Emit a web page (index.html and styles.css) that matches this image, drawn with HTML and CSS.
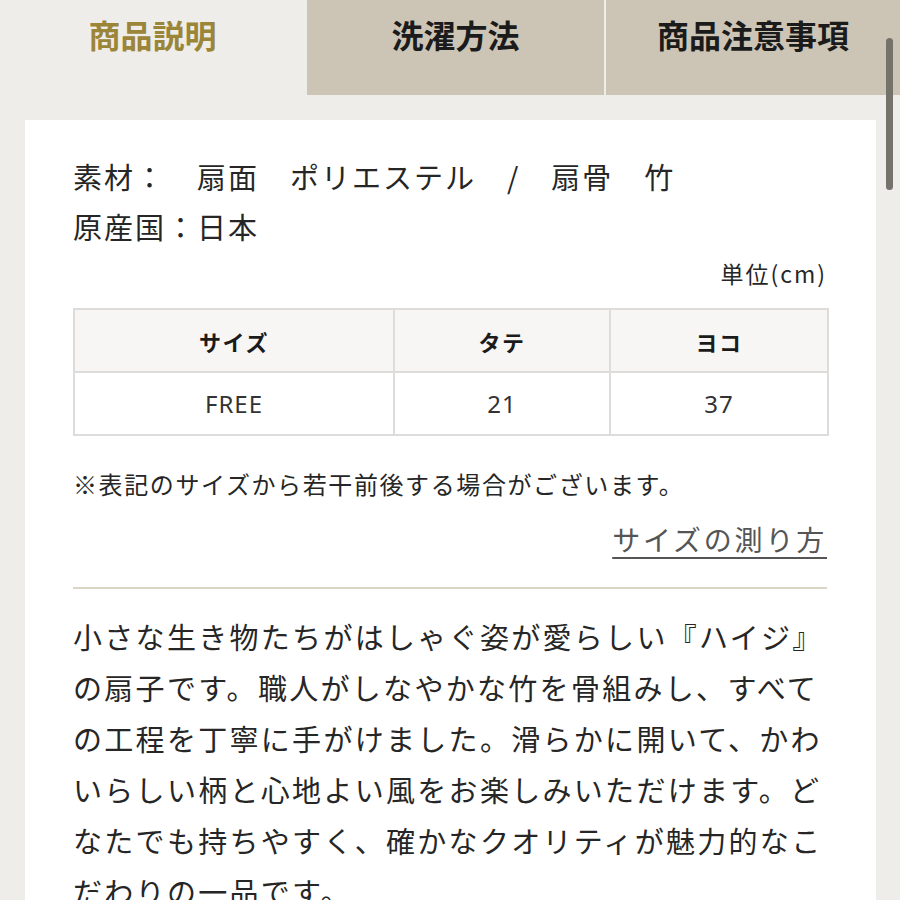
FILE: index.html
```html
<!DOCTYPE html>
<html lang="ja">
<head>
<meta charset="utf-8">
<link rel="stylesheet" href="styles.css">
</head>
<body>
<div class="page">
  <nav class="tabs">
    <div class="tab active">商品説明</div>
    <div class="tab">洗濯方法</div>
    <div class="tab">商品注意事項</div>
  </nav>
  <section class="card">
    <p class="spec">素材：　扇面　ポリエステル　/　扇骨　竹</p>
    <p class="spec">原産国：日本</p>
    <p class="unit">単位(cm)</p>
    <table class="size-table">
      <colgroup><col class="c1"><col class="c2"><col class="c3"></colgroup>
      <thead>
        <tr><th>サイズ</th><th>タテ</th><th>ヨコ</th></tr>
      </thead>
      <tbody>
        <tr><td>FREE</td><td>21</td><td>37</td></tr>
      </tbody>
    </table>
    <p class="note">※表記のサイズから若干前後する場合がございます。</p>
    <p class="link-row"><a class="link">サイズの測り方</a></p>
    <hr class="divider">
    <p class="desc">小さな生き物たちがはしゃぐ姿が愛らしい『ハイジ』の扇子です。職人がしなやかな竹を骨組みし、すべての工程を丁寧に手がけました。滑らかに開いて、かわいらしい柄と心地よい風をお楽しみいただけます。どなたでも持ちやすく、確かなクオリティが魅力的なこだわりの一品です。</p>
  </section>
  <div class="scrollbar"></div>
</div>
</body>
</html>
```
FILE: styles.css
```css
html, body {
  margin: 0;
  padding: 0;
  background: #efedea;
  height: 900px;
  overflow: hidden;
}
body {
  font-family: "Noto Sans CJK JP", "Noto Sans", sans-serif;
  color: #262626;
}
.page {
  position: relative;
  width: 900px;
  height: 900px;
  overflow: hidden;
}
.tabs {
  display: grid;
  grid-template-columns: 305px 297px 1fr;
  column-gap: 2px;
  height: 95px;
}
.tab {
  background: #ccc5b6;
  font-size: 32px;
  font-weight: 700;
  color: #1b1b1b;
  text-align: center;
  line-height: 40px;
  padding-top: 14px;
  box-sizing: border-box;
}
.tab.active {
  background: #efedea;
  color: #9b8538;
}
.card {
  background: #ffffff;
  margin: 25px 24px 0 25px;
  padding: 31px 49px 40px 48px;
  min-height: 900px;
}
.spec {
  margin: 0;
  font-size: 29px;
  line-height: 50px;
  letter-spacing: 2px;
  white-space: nowrap;
}
.unit {
  margin: 0 0 13px;
  text-align: right;
  font-size: 23px;
  line-height: 44px;
  letter-spacing: 2px;
}
.size-table {
  width: 754px;
  table-layout: fixed;
  border-collapse: collapse;
  font-size: 22px;
  letter-spacing: 1.5px;
}
.size-table .c1 { width: 320px; }
.size-table .c2 { width: 216px; }
.size-table .c3 { width: 218px; }
.size-table th,
.size-table td {
  border: 2px solid #dedcda;
  height: 61px;
  padding: 0;
  text-align: center;
  vertical-align: middle;
}
.size-table th {
  background: #f7f6f4;
  font-weight: 700;
  color: #1b1b1b;
}
.size-table td {
  color: #333333;
  font-size: 24px;
  letter-spacing: 1px;
  font-family: "Noto Sans", "Noto Sans CJK JP", sans-serif;
}
.note {
  margin: 28px 0 0;
  font-size: 24px;
  line-height: 40px;
  letter-spacing: 1.6px;
  white-space: nowrap;
}
.link-row {
  margin: 13px 0 0;
  text-align: right;
  line-height: 44px;
}
.link {
  font-size: 28px;
  letter-spacing: 2.8px;
  color: #555555;
  text-decoration: underline;
  text-decoration-thickness: 2px;
  text-underline-offset: 6px;
}
.divider {
  margin: 21px 0 0;
  border: none;
  height: 2px;
  background: #dbd5c6;
}
.desc {
  margin: 22px 0 0;
  font-size: 29px;
  line-height: 51px;
  letter-spacing: 2.3px;
  line-break: strict;
}
.scrollbar {
  position: absolute;
  top: 38px;
  left: 886px;
  width: 7px;
  height: 152px;
  border-radius: 4px;
  background: #75716b;
}
```
